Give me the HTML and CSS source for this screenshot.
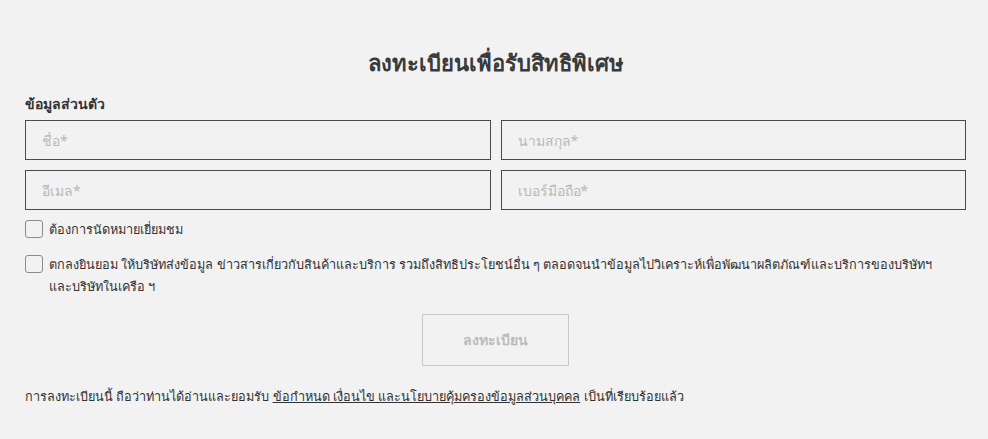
FILE: index.html
```html
<!DOCTYPE html>
<html lang="th">
<head>
<meta charset="utf-8">
<link rel="stylesheet" href="styles.css">
</head>
<body>
<div class="page">
  <h1 class="title">ลงทะเบียนเพื่อรับสิทธิพิเศษ</h1>
  <div class="section-label">ข้อมูลส่วนตัว</div>
  <div class="grid">
    <input class="field" type="text" placeholder="ชื่อ*">
    <input class="field" type="text" placeholder="นามสกุล*">
    <input class="field" type="text" placeholder="อีเมล*">
    <input class="field" type="text" placeholder="เบอร์มือถือ*">
  </div>
  <label class="check check-first">
    <span class="box"></span>
    <span class="check-text">ต้องการนัดหมายเยี่ยมชม</span>
  </label>
  <label class="check check-second">
    <span class="box"></span>
    <span class="check-text">ตกลงยินยอม ให้บริษัทส่งข้อมูล ข่าวสารเกี่ยวกับสินค้าและบริการ รวมถึงสิทธิประโยชน์อื่น ๆ ตลอดจนนำข้อมูลไปวิเคราะห์เพื่อพัฒนาผลิตภัณฑ์และบริการของบริษัทฯ และบริษัทในเครือ ฯ</span>
  </label>
  <div class="actions">
    <button class="submit" type="button">ลงทะเบียน</button>
  </div>
  <p class="terms">การลงทะเบียนนี้ ถือว่าท่านได้อ่านและยอมรับ <a href="#">ข้อกำหนด เงื่อนไข และนโยบายคุ้มครองข้อมูลส่วนบุคคล</a> เป็นที่เรียบร้อยแล้ว</p>
</div>
</body>
</html>
```
FILE: styles.css
```css
html, body {
  margin: 0;
  padding: 0;
  background: #f2f2f2;
}
body {
  font-family: "Noto Sans", "DejaVu Sans", sans-serif;
  color: #333;
}
.page {
  padding: 44px 22px 0 25px;
}
.title {
  margin: 0;
  text-align: center;
  font-size: 22px;
  line-height: 36px;
  font-weight: 700;
  color: #3a3a3a;
}
.section-label {
  margin-top: 14px;
  font-size: 14px;
  font-weight: 700;
  line-height: 20px;
  color: #333;
}
.grid {
  margin-top: 6px;
  display: grid;
  grid-template-columns: 1fr 1fr;
  gap: 10px;
}
.field {
  box-sizing: border-box;
  height: 40px;
  border: 1px solid #4a4a4a;
  background: #f2f2f2;
  padding: 0 16px;
  font-family: inherit;
  font-size: 14px;
  color: #333;
  outline: none;
}
.field::placeholder {
  color: #b8b8b8;
}
.check {
  display: flex;
  align-items: flex-start;
  gap: 6px;
  font-size: 12.7px;
  line-height: 22px;
  color: #333;
}
.check-first {
  margin-top: 10px;
}
.check-second {
  margin-top: 15px;
}
.box {
  flex: none;
  box-sizing: border-box;
  width: 18px;
  height: 18px;
  border: 1px solid #8a8a8a;
  border-radius: 3px;
  background: #f2f2f2;
}
.check-text {
  margin-top: -2px;
  max-width: 900px;
}
.actions {
  display: flex;
  justify-content: center;
  margin-top: 17px;
}
.submit {
  width: 147px;
  height: 52px;
  border: 1px solid #c8c8c8;
  background: #f2f2f2;
  font-family: inherit;
  font-size: 14px;
  font-weight: 700;
  color: #bbbbbb;
}
.terms {
  margin: 19px 0 0;
  font-size: 12.7px;
  line-height: 22px;
  color: #333;
}
.terms a {
  color: #333;
  text-decoration: underline;
}
```
